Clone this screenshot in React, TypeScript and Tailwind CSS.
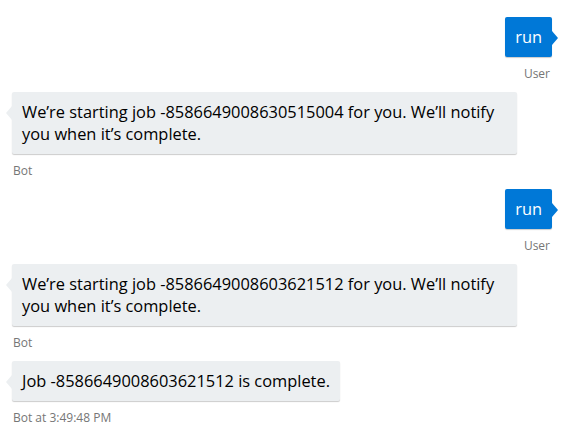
import React from 'react';

type Msg = {
  from: 'user' | 'bot';
  text: string;
  label: string;
};

const messages: Msg[] = [
  { from: 'user', text: 'run', label: 'User' },
  {
    from: 'bot',
    text: 'We’re starting job -8586649008630515004 for you. We’ll notify you when it’s complete.',
    label: 'Bot',
  },
  { from: 'user', text: 'run', label: 'User' },
  {
    from: 'bot',
    text: 'We’re starting job -8586649008603621512 for you. We’ll notify you when it’s complete.',
    label: 'Bot',
  },
  { from: 'bot', text: 'Job -8586649008603621512 is complete.', label: 'Bot at 3:49:48 PM' },
];

const Message: React.FC<{ msg: Msg }> = ({ msg }) => {
  const isUser = msg.from === 'user';
  return (
    <div className={`flex flex-col ${isUser ? 'items-end pr-[15px]' : 'items-start pl-[12px]'}`}>
      <div
        className={`relative w-fit max-w-[505px] rounded-[2px] px-[10px] py-[9px] text-[16.4px] leading-[22px] shadow-[0_1px_1px_0_rgba(0,0,0,0.2)] ${
          isUser ? 'bg-[#0078d7] text-white' : 'bg-[#eceff1] text-black'
        }`}
      >
        {msg.text}
        {isUser ? (
          <span className="absolute right-[-6px] top-[14px] h-0 w-0 border-y-[7px] border-l-[6px] border-y-transparent border-l-[#0078d7]" />
        ) : (
          <span className="absolute left-[-6px] top-[14px] h-0 w-0 border-y-[7px] border-r-[6px] border-y-transparent border-r-[#eceff1]" />
        )}
      </div>
      <div className={`mt-[9px] mb-[10px] h-4 text-[12px] leading-4 text-[#767676] ${isUser ? 'pr-[2px]' : 'pl-[1px]'}`}>
        {msg.label}
      </div>
    </div>
  );
};

export default function App() {
  return (
    <div className="h-[431px] w-[567px] overflow-hidden bg-white pt-[17px] font-['Open_Sans',sans-serif]">
      {messages.map((m, i) => (
        <Message key={i} msg={m} />
      ))}
    </div>
  );
}
